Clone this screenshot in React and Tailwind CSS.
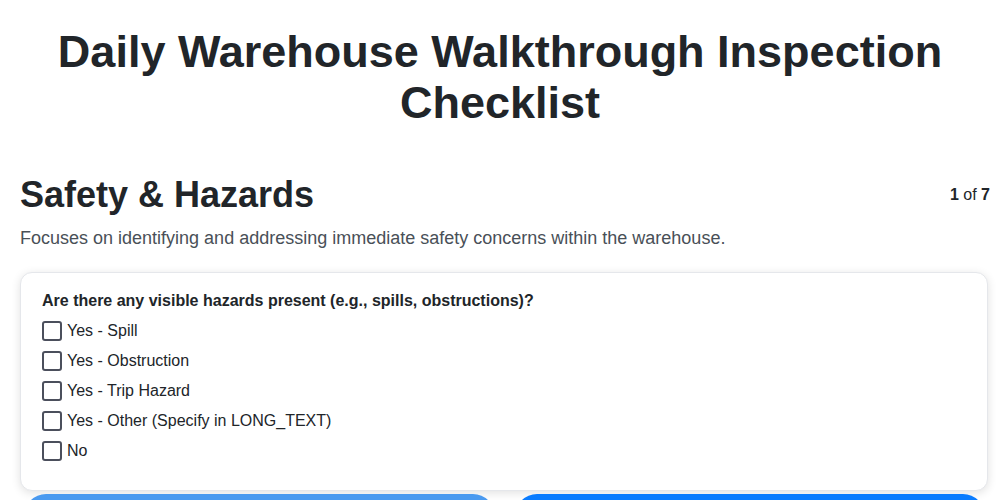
import { useState } from 'react';

const OPTIONS = [
  'Yes - Spill',
  'Yes - Obstruction',
  'Yes - Trip Hazard',
  'Yes - Other (Specify in LONG_TEXT)',
  'No',
];

export default function App() {
  const [checked, setChecked] = useState({});

  return (
    <div className="min-h-screen bg-white text-[#212529]" style={{ fontFamily: '"Liberation Sans", Arial, sans-serif' }}>
      <h1 className="pt-[26px] text-center text-[45px] font-bold leading-[51px]">
        Daily Warehouse Walkthrough Inspection
        <br />
        Checklist
      </h1>

      <div className="ml-5 mr-[10px] mt-[45px]">
        {/* section header */}
        <div className="flex items-center justify-between">
          <h2 className="text-4xl font-bold leading-[43px]">Safety &amp; Hazards</h2>
          <span className="text-base">
            <b>1</b> of <b>7</b>
          </span>
        </div>
        <p className="mt-[9px] text-lg leading-[27px] text-[#495057]">
          Focuses on identifying and addressing immediate safety concerns within the warehouse.
        </p>

        {/* question card */}
        <div className="mr-[2px] mt-[20px] rounded-xl border border-[#e5e7eb] bg-white px-[21px] pb-[24px] pt-4 shadow-[0_2px_10px_rgba(0,0,0,0.12)]">
          <p className="mb-[3px] text-base font-bold leading-6">
            Are there any visible hazards present (e.g., spills, obstructions)?
          </p>
          {OPTIONS.map((o) => (
            <label key={o} className="flex h-[30px] cursor-pointer items-center gap-[5px] text-base">
              <input
                type="checkbox"
                className="peer sr-only"
                checked={!!checked[o]}
                onChange={() => setChecked((c) => ({ ...c, [o]: !c[o] }))}
              />
              <span className="h-5 w-5 rounded-[3px] border-2 border-[#4b4f5c] peer-checked:bg-[#0d7fff]" />
              {o}
            </label>
          ))}
        </div>

        {/* nav buttons */}
        <div className="mt-[3px] flex gap-[20px] pl-[4px] pr-[5px]">
          <button className="h-11 flex-1 rounded-full bg-[#4a9af0] font-bold text-white">Previous</button>
          <button className="h-11 flex-1 rounded-full bg-[#0a7cff] font-bold text-white">Next</button>
        </div>
      </div>
    </div>
  );
}
